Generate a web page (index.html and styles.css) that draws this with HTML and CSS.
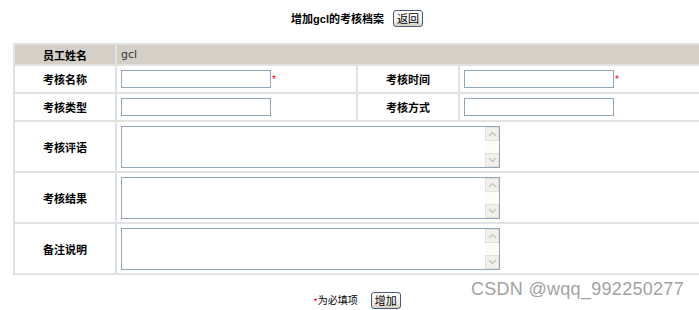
FILE: index.html
```html
<!DOCTYPE html>
<html lang="zh-CN">
<head>
    <meta charset="UTF-8">
    <title>增加gcl的考核档案</title>
    <link rel="stylesheet" href="styles.css">
</head>
<body>
    <div class="page">
        <div class="title-bar">
            <span class="title">增加gcl的考核档案</span>
            <button class="btn">返回</button>
        </div>

        <table class="form-table">
            <tr class="head-row">
                <td class="label">员工姓名</td>
                <td colspan="3" class="value name">gcl</td>
            </tr>
            <tr class="row">
                <td class="label">考核名称</td>
                <td class="value"><input type="text" class="text"><span class="req">*</span></td>
                <td class="label">考核时间</td>
                <td class="value"><input type="text" class="text"><span class="req">*</span></td>
            </tr>
            <tr class="row">
                <td class="label">考核类型</td>
                <td class="value"><input type="text" class="text"></td>
                <td class="label">考核方式</td>
                <td class="value"><input type="text" class="text"></td>
            </tr>
            <tr class="area-row">
                <td class="label">考核评语</td>
                <td colspan="3" class="value">
                    <div class="area">
                        <textarea></textarea>
                        <div class="scroll">
                            <span class="arrow"><svg width="9" height="6" viewBox="0 0 9 6"><path d="M1 5 L4.5 1.5 L8 5" fill="none" stroke="#c4c4bc" stroke-width="1.3"/></svg></span>
                            <span class="track"></span>
                            <span class="arrow"><svg width="9" height="6" viewBox="0 0 9 6"><path d="M1 1 L4.5 4.5 L8 1" fill="none" stroke="#c4c4bc" stroke-width="1.3"/></svg></span>
                        </div>
                    </div>
                </td>
            </tr>
            <tr class="area-row">
                <td class="label">考核结果</td>
                <td colspan="3" class="value">
                    <div class="area">
                        <textarea></textarea>
                        <div class="scroll">
                            <span class="arrow"><svg width="9" height="6" viewBox="0 0 9 6"><path d="M1 5 L4.5 1.5 L8 5" fill="none" stroke="#c4c4bc" stroke-width="1.3"/></svg></span>
                            <span class="track"></span>
                            <span class="arrow"><svg width="9" height="6" viewBox="0 0 9 6"><path d="M1 1 L4.5 4.5 L8 1" fill="none" stroke="#c4c4bc" stroke-width="1.3"/></svg></span>
                        </div>
                    </div>
                </td>
            </tr>
            <tr class="area-row">
                <td class="label">备注说明</td>
                <td colspan="3" class="value">
                    <div class="area">
                        <textarea></textarea>
                        <div class="scroll">
                            <span class="arrow"><svg width="9" height="6" viewBox="0 0 9 6"><path d="M1 5 L4.5 1.5 L8 5" fill="none" stroke="#c4c4bc" stroke-width="1.3"/></svg></span>
                            <span class="track"></span>
                            <span class="arrow"><svg width="9" height="6" viewBox="0 0 9 6"><path d="M1 1 L4.5 4.5 L8 1" fill="none" stroke="#c4c4bc" stroke-width="1.3"/></svg></span>
                        </div>
                    </div>
                </td>
            </tr>
        </table>

        <div class="submit-bar">
            <span class="note"><span class="req">*</span>为必填项</span>
            <button class="btn">增加</button>
        </div>
    </div>

    <div class="watermark">CSDN @wqq_992250277</div>
</body>
</html>
```

FILE: styles.css
```css
html, body {
    margin: 0;
    padding: 0;
    overflow: hidden;
}

body {
    font-family: "Liberation Sans", "Noto Sans CJK SC", sans-serif;
    font-size: 11px;
    color: #000;
    background: #fff;
}

.page {
    width: 688px;
    margin-left: 13px;
}

.title-bar {
    display: flex;
    justify-content: center;
    align-items: center;
    gap: 9px;
    height: 18px;
    padding-top: 9px;
    margin-bottom: 16px;
}

.title {
    font-weight: bold;
}

.btn {
    font-family: "Noto Sans CJK SC", sans-serif;
    font-size: 11px;
    line-height: 13px;
    height: 17px;
    padding: 0 3px;
    border: 1px solid #4a5a78;
    border-radius: 3px;
    background: linear-gradient(#ffffff, #ecebe6 70%, #d6d0c5);
    color: #000;
}

.form-table {
    width: 688px;
    border-collapse: collapse;
    border: 2px solid #e4e4e4;
}

.form-table td {
    border: 2px solid #e2e2e2;
    padding: 0;
    vertical-align: middle;
}

.form-table .label {
    width: 100px;
    text-align: center;
    font-weight: bold;
    font-family: "Noto Sans CJK SC", sans-serif;
}

.form-table .value {
    padding-left: 4px;
}

.form-table tr > td:nth-child(2) {
    width: 235px;
}

.head-row td {
    height: 19px;
    background: #d4d0c8;
}

.name {
    color: #333;
    font-family: "DejaVu Sans", sans-serif;
    font-size: 11px;
}

.row td {
    height: 26px;
}

.area-row td {
    height: 49px;
}

.text {
    width: 150px;
    height: 18px;
    box-sizing: border-box;
    border: 1px solid #8fa6bd;
    padding: 0;
    vertical-align: middle;
}

.req {
    color: #f00;
    font-size: 10px;
    margin-left: 1px;
    vertical-align: middle;
}

.area {
    display: flex;
    width: 379px;
    height: 42px;
    box-sizing: border-box;
    border: 1px solid #8fa6bd;
    background: #fff;
}

.area textarea {
    flex: 1;
    border: none;
    resize: none;
    outline: none;
    padding: 0;
    margin: 0;
    overflow: hidden;
}

.scroll {
    width: 14px;
    display: flex;
    flex-direction: column;
    background: #fdfdf8;
}

.arrow {
    height: 14px;
    display: flex;
    align-items: center;
    justify-content: center;
    background: #f1f0ea;
    border: 1px solid #e4e2d8;
    box-sizing: border-box;
}

.track {
    flex: 1;
}

.submit-bar {
    display: flex;
    justify-content: center;
    align-items: center;
    gap: 13px;
    margin-top: 17px;
}

.note {
    font-family: "Noto Sans CJK SC", sans-serif;
    font-size: 10px;
}

.note .req {
    font-size: 10px;
    margin: 0;
}

.watermark {
    position: absolute;
    right: 15px;
    bottom: 10px;
    font-family: "Liberation Sans", sans-serif;
    font-size: 18px;
    color: #a3a3a3;
    letter-spacing: 0.3px;
}
```
